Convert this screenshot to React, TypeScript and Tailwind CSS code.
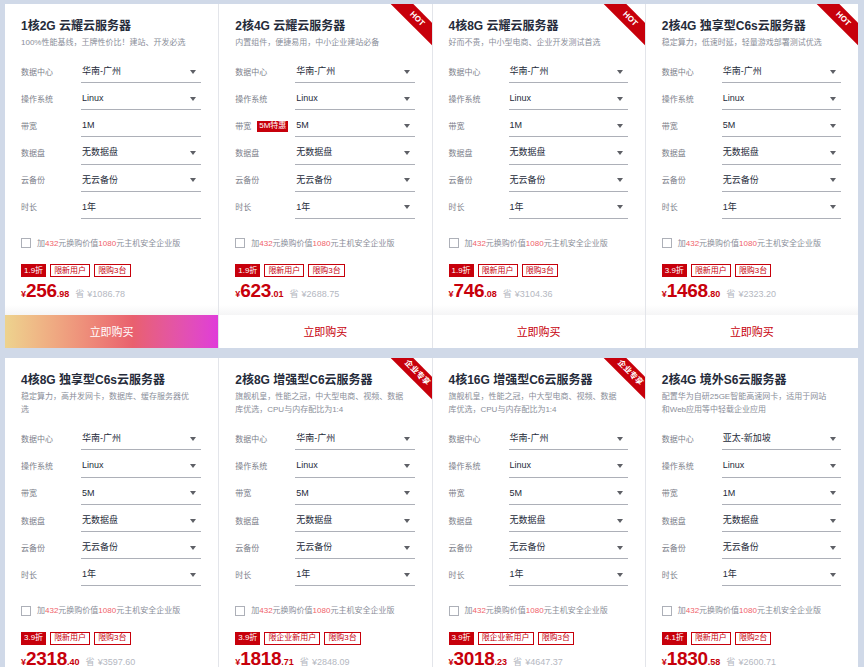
import React from "react";

type CardData = {
  title: string;
  sub: string;
  region: string;
  bw: string;
  bwArrow: boolean;
  timeArrow: boolean;
  bwTag?: string;
  discount: string;
  userTag: string;
  limitTag: string;
  price: string;
  cents: string;
  orig: string;
  ribbon?: string;
  gradient?: boolean;
};

const row1: CardData[] = [
  {
    title: "1核2G 云耀云服务器",
    sub: "100%性能基线，王牌性价比！建站、开发必选",
    region: "华南-广州",
    bw: "1M",
    bwArrow: false,
    timeArrow: false,
    discount: "1.9折",
    userTag: "限新用户",
    limitTag: "限购3台",
    price: "256",
    cents: ".98",
    orig: "¥1086.78",
    gradient: true,
  },
  {
    title: "2核4G 云耀云服务器",
    sub: "内置组件，便捷易用，中小企业建站必备",
    region: "华南-广州",
    bw: "5M",
    bwArrow: true,
    timeArrow: true,
    bwTag: "5M特惠",
    discount: "1.9折",
    userTag: "限新用户",
    limitTag: "限购3台",
    price: "623",
    cents: ".01",
    orig: "¥2688.75",
    ribbon: "HOT",
  },
  {
    title: "4核8G 云耀云服务器",
    sub: "好而不贵，中小型电商、企业开发测试首选",
    region: "华南-广州",
    bw: "1M",
    bwArrow: true,
    timeArrow: true,
    discount: "1.9折",
    userTag: "限新用户",
    limitTag: "限购3台",
    price: "746",
    cents: ".08",
    orig: "¥3104.36",
    ribbon: "HOT",
  },
  {
    title: "2核4G 独享型C6s云服务器",
    sub: "稳定算力，低速时延，轻量游戏部署测试优选",
    region: "华南-广州",
    bw: "5M",
    bwArrow: true,
    timeArrow: true,
    discount: "3.9折",
    userTag: "限新用户",
    limitTag: "限购3台",
    price: "1468",
    cents: ".80",
    orig: "¥2323.20",
    ribbon: "HOT",
  },
];

const row2: CardData[] = [
  {
    title: "4核8G 独享型C6s云服务器",
    sub: "稳定算力，高并发网卡，数据库、缓存服务器优选",
    region: "华南-广州",
    bw: "5M",
    bwArrow: true,
    timeArrow: true,
    discount: "3.9折",
    userTag: "限新用户",
    limitTag: "限购3台",
    price: "2318",
    cents: ".40",
    orig: "¥3597.60",
  },
  {
    title: "2核8G 增强型C6云服务器",
    sub: "旗舰机皇，性能之冠，中大型电商、视频、数据库优选，CPU与内存配比为1:4",
    region: "华南-广州",
    bw: "5M",
    bwArrow: true,
    timeArrow: true,
    discount: "3.9折",
    userTag: "限企业新用户",
    limitTag: "限购3台",
    price: "1818",
    cents: ".71",
    orig: "¥2848.09",
    ribbon: "企业专享",
  },
  {
    title: "4核16G 增强型C6云服务器",
    sub: "旗舰机皇，性能之冠，中大型电商、视频、数据库优选，CPU与内存配比为1:4",
    region: "华南-广州",
    bw: "5M",
    bwArrow: true,
    timeArrow: true,
    discount: "3.9折",
    userTag: "限企业新用户",
    limitTag: "限购3台",
    price: "3018",
    cents: ".23",
    orig: "¥4647.37",
    ribbon: "企业专享",
  },
  {
    title: "2核4G 境外S6云服务器",
    sub: "配置华为自研25GE智能高速网卡，适用于网站和Web应用等中轻载企业应用",
    region: "亚太-新加坡",
    bw: "1M",
    bwArrow: true,
    timeArrow: true,
    discount: "4.1折",
    userTag: "限新用户",
    limitTag: "限购2台",
    price: "1830",
    cents: ".58",
    orig: "¥2600.71",
  },
];

function Arrow() {
  return (
    <span className="h-0 w-0 border-x-[3px] border-t-[4px] border-x-transparent border-t-[#5e6066]" />
  );
}

function FormRow({
  label,
  value,
  arrow,
  tag,
}: {
  label: string;
  value: string;
  arrow: boolean;
  tag?: string;
}) {
  return (
    <div className="flex h-[22px] items-center">
      <div className="flex w-[60px] shrink-0 items-center">
        <span className="whitespace-nowrap text-[8px] leading-[13px] text-[#7c808a]">{label}</span>
        {tag && (
          <span className="ml-[6px] flex h-[11px] shrink-0 items-center whitespace-nowrap bg-[#c7000b] px-[2px] text-[8px] leading-none text-white">
            {tag}
          </span>
        )}
      </div>
      <div className="flex h-[22px] flex-1 items-center justify-between border-b border-[#adb0b8] pl-[1px] pr-[5px]">
        <span className="text-[9px] text-[#252b3a]">{value}</span>
        {arrow && <Arrow />}
      </div>
    </div>
  );
}

function Card({ d, first }: { d: CardData; first: boolean }) {
  return (
    <div
      className={
        first
          ? "relative flex flex-col overflow-hidden bg-white"
          : "relative flex flex-col overflow-hidden border-l border-[#e3e5ea] bg-white"
      }
    >
      {d.ribbon && (
        <div className="absolute right-[-15px] top-[7px] flex h-[16px] w-[60px] rotate-45 items-center justify-center bg-[#c7000b] text-[8px] font-bold leading-none text-white">
          {d.ribbon}
        </div>
      )}
      <div className="flex-1 pl-4 pr-[17px] pt-[13px]">
        <div className="text-[12px] font-bold leading-[18px] text-[#252b3a]">{d.title}</div>
        <div className="mt-[1px] w-[170px] text-[8px] leading-[13px] text-[#8a8e99]">{d.sub}</div>
        <div className="mt-[12px] flex flex-col gap-[5.2px]">
          <FormRow label="数据中心" value={d.region} arrow />
          <FormRow label="操作系统" value="Linux" arrow />
          <FormRow label="带宽" value={d.bw} arrow={d.bwArrow} tag={d.bwTag} />
          <FormRow label="数据盘" value="无数据盘" arrow />
          <FormRow label="云备份" value="无云备份" arrow />
          <FormRow label="时长" value="1年" arrow={d.timeArrow} />
        </div>
        <div className="mt-[18px] flex h-[13px] items-center">
          <span className="h-[10px] w-[10px] border border-[#adb0b8] bg-white" />
          <span className="ml-[6px] text-[8px] leading-[13px] text-[#8a8e99]">
            加<span className="text-[#f0626a]">432</span>元换购价值
            <span className="text-[#f0626a]">1080</span>元主机安全企业版
          </span>
        </div>
        <div className="mt-[14.5px] flex h-[13px] items-stretch gap-[4px] text-[8px]">
          <span className="flex items-center bg-[#c7000b] px-[3px] text-white">{d.discount}</span>
          <span className="flex items-center border border-[#c7000b] px-[3px] text-[#c7000b]">
            {d.userTag}
          </span>
          <span className="flex items-center border border-[#c7000b] px-[3px] text-[#c7000b]">
            {d.limitTag}
          </span>
        </div>
        <div className="mt-[3px] flex items-baseline leading-[22px] text-[#c7000b]">
          <span className="text-[9px] font-bold">¥</span>
          <span className="text-[19px] font-bold tracking-[-0.3px]">{d.price}</span>
          <span className="text-[9px] font-bold">{d.cents}</span>
          <span className="ml-[6px] text-[9px] text-[#b4b7bf]">省</span>
          <span className="ml-[3px] text-[9px] text-[#b4b7bf]">{d.orig}</span>
        </div>
      </div>
      <div className="h-[10px] bg-linear-to-b from-white to-[#f5f5f6]" />
      {d.gradient ? (
        <div className="flex h-[33px] items-center justify-center bg-linear-to-r from-[#edd38e] via-[#e9606e] via-60% to-[#e03bd9] text-[11px] text-white">
          立即购买
        </div>
      ) : (
        <div className="flex h-[33px] items-center justify-center bg-white text-[11px] text-[#c7000b]">
          立即购买
        </div>
      )}
    </div>
  );
}

export default function App() {
  return (
    <div className="min-h-screen bg-[#d0d9e8] pt-[4px] font-[family-name:'Liberation_Sans','Noto_Sans_CJK_SC',sans-serif]">
      <div className="ml-[5px] flex w-[853px] flex-col gap-[10px]">
        <div className="grid grid-cols-4">
          {row1.map((d, i) => (
            <Card key={i} d={d} first={i === 0} />
          ))}
        </div>
        <div className="grid grid-cols-4">
          {row2.map((d, i) => (
            <Card key={i} d={d} first={i === 0} />
          ))}
        </div>
      </div>
    </div>
  );
}
